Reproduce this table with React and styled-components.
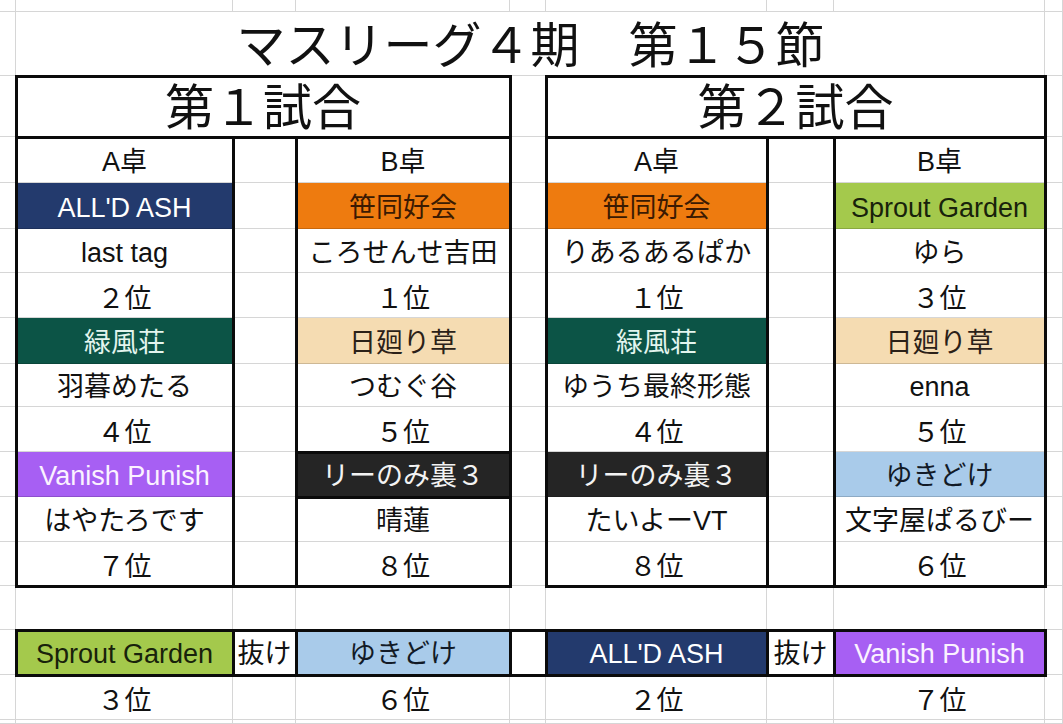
import React from 'react';
import styled, { createGlobalStyle } from 'styled-components';

const COLUMNS = '16px 217px 63px 214px 36px 221px 67px 211px 1fr';
const ROW_HEIGHTS = [12, 64, 61, 46, 46, 44, 45, 46, 43, 45, 45, 45, 44, 44, 45, 45, 4];

const TEAMS = {
  ash: { name: "ALL'D ASH", bg: '#233a6d', fg: '#ffffff' },
  sasa: { name: '笹同好会', bg: '#ee7b0f', fg: '#3b1a02' },
  ryoku: { name: '緑風荘', bg: '#0c5446', fg: '#e3f5ee' },
  hima: { name: '日廻り草', bg: '#f5dcb2', fg: '#2b2118' },
  vanish: { name: 'Vanish Punish', bg: '#a75ff3', fg: '#fbf2ff' },
  ri: { name: 'リーのみ裏３', bg: '#252525', fg: '#f3f3f3' },
  sprout: { name: 'Sprout Garden', bg: '#a4c94c', fg: '#18220b' },
  yuki: { name: 'ゆきどけ', bg: '#a9cbea', fg: '#121a26' },
};

const MATCHES = [
  {
    title: '第１試合',
    a: [['ash', 'last tag', '２位'], ['ryoku', '羽暮めたる', '４位'], ['vanish', 'はやたろです', '７位']],
    b: [['sasa', 'ころせんせ吉田', '１位'], ['hima', 'つむぐ谷', '５位'], ['ri', '晴蓮', '８位']],
    framedTeam: { side: 'b', slot: 2 },
  },
  {
    title: '第２試合',
    a: [['sasa', 'りあるあるぱか', '１位'], ['ryoku', 'ゆうち最終形態', '４位'], ['ri', 'たいよーVT', '８位']],
    b: [['sprout', 'ゆら', '３位'], ['hima', 'enna', '５位'], ['yuki', '文字屋ぱるびー', '６位']],
  },
];

const BYES = [
  { a: ['sprout', '３位'], b: ['yuki', '６位'] },
  { a: ['ash', '２位'], b: ['vanish', '７位'] },
];

const GlobalStyle = createGlobalStyle`
  html, body {
    margin: 0;
    background: #ffffff;
  }
  body {
    font-family: 'Liberation Sans', 'Noto Sans CJK JP', sans-serif;
    color: #111111;
  }
`;

const Sheet = styled.div`
  display: grid;
  width: 1063px;
  height: 724px;
  overflow: hidden;
  background: #ffffff;
`;

const CellLayer = styled.div`
  grid-area: 1 / 1;
  display: flex;
  flex-direction: column;
`;

const Row = styled.div`
  flex: none;
  display: grid;
  grid-template-columns: ${COLUMNS};
  height: ${({ $h }) => $h}px;
`;

const Cell = styled.div`
  grid-column: span ${({ $span }) => $span || 1};
  display: flex;
  align-items: center;
  justify-content: center;
  box-sizing: border-box;
  padding-top: ${({ $low }) => ($low ? 7 : 4)}px;
  min-width: 0;
  overflow: hidden;
  white-space: nowrap;
  line-height: 1;
  font-size: ${({ $size }) => $size || 27}px;
  background: ${({ $bg }) => $bg || 'transparent'};
  color: ${({ $fg }) => $fg || '#111111'};
  box-shadow: inset -1px -1px 0 rgba(0, 0, 0, 0.16);
`;

const FrameLayer = styled.div`
  grid-area: 1 / 1;
  display: grid;
  grid-template-columns: ${COLUMNS};
  grid-template-rows: ${ROW_HEIGHTS.map((h) => `${h}px`).join(' ')};
  pointer-events: none;
`;

const Frame = styled.div`
  grid-column: ${({ $col }) => $col};
  grid-row: ${({ $row }) => $row};
  margin: -1px -2px -2px -1px;
  border: 3px solid #0b0b0b;
`;

const blank = () => ({});
const team = (key) => ({ text: TEAMS[key].name, bg: TEAMS[key].bg, fg: TEAMS[key].fg });
const rank = (text) => ({ text, low: true });

const buildRows = () => {
  const rows = [];
  const empty = () => Array.from({ length: 9 }, blank);

  rows.push(empty());
  rows.push([blank(), { text: 'マスリーグ４期　第１５節', span: 7, size: 49 }, blank()]);
  rows.push([
    blank(),
    { text: MATCHES[0].title, span: 3, size: 49 },
    blank(),
    { text: MATCHES[1].title, span: 3, size: 49 },
    blank(),
  ]);
  rows.push([blank(), { text: 'A卓' }, blank(), { text: 'B卓' }, blank(), { text: 'A卓' }, blank(), { text: 'B卓' }, blank()]);

  for (let slot = 0; slot < 3; slot++) {
    for (let line = 0; line < 3; line++) {
      const pick = (entry) => {
        if (line === 0) return team(entry[0]);
        return line === 2 ? rank(entry[2]) : { text: entry[1] };
      };
      rows.push([
        blank(),
        pick(MATCHES[0].a[slot]), blank(), pick(MATCHES[0].b[slot]),
        blank(),
        pick(MATCHES[1].a[slot]), blank(), pick(MATCHES[1].b[slot]),
        blank(),
      ]);
    }
  }

  rows.push(empty());
  rows.push([
    blank(),
    team(BYES[0].a[0]), { text: '抜け' }, team(BYES[0].b[0]),
    blank(),
    team(BYES[1].a[0]), { text: '抜け' }, team(BYES[1].b[0]),
    blank(),
  ]);
  rows.push([
    blank(),
    rank(BYES[0].a[1]), blank(), rank(BYES[0].b[1]),
    blank(),
    rank(BYES[1].a[1]), blank(), rank(BYES[1].b[1]),
    blank(),
  ]);
  rows.push(empty());
  return rows;
};

const buildFrames = () => {
  const frames = [];
  MATCHES.forEach((match, i) => {
    const left = i === 0 ? 2 : 6;
    frames.push({ col: `${left} / ${left + 3}`, row: '3 / 14' });
    frames.push({ col: `${left} / ${left + 3}`, row: '3 / 4' });
    frames.push({ col: `${left + 1} / ${left + 2}`, row: '4 / 14' });
    if (match.framedTeam) {
      const col = left + (match.framedTeam.side === 'a' ? 0 : 2);
      const row = 5 + match.framedTeam.slot * 3;
      frames.push({ col: `${col} / ${col + 1}`, row: `${row} / ${row + 1}` });
    }
  });
  for (let col = 2; col < 9; col++) {
    frames.push({ col: `${col} / ${col + 1}`, row: '15 / 16' });
  }
  return frames;
};

export default function App() {
  const rows = buildRows();
  const frames = buildFrames();

  return (
    <>
      <GlobalStyle />
      <Sheet>
        <CellLayer>
          {rows.map((cells, r) => (
            <Row key={r} $h={ROW_HEIGHTS[r]}>
              {cells.map((cell, c) => (
                <Cell
                  key={c}
                  $span={cell.span}
                  $size={cell.size}
                  $bg={cell.bg}
                  $fg={cell.fg}
                  $low={cell.low}
                >
                  {cell.text}
                </Cell>
              ))}
            </Row>
          ))}
        </CellLayer>
        <FrameLayer>
          {frames.map((f, i) => (
            <Frame key={i} $col={f.col} $row={f.row} />
          ))}
        </FrameLayer>
      </Sheet>
    </>
  );
}
